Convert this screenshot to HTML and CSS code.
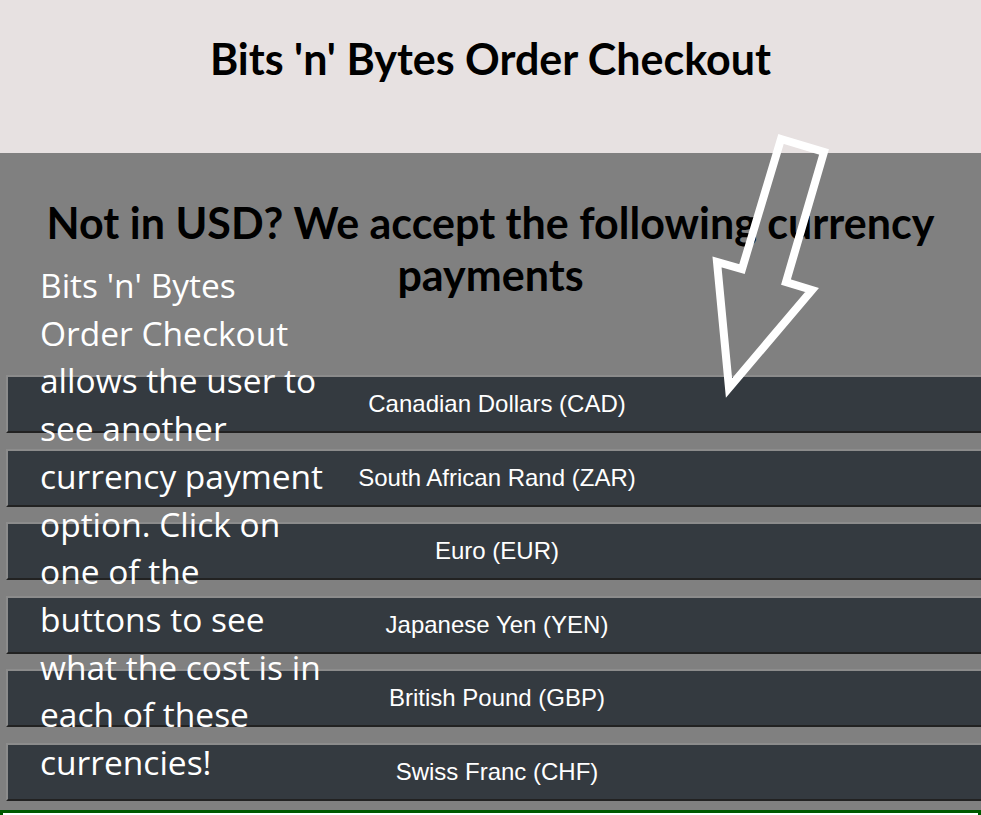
FILE: index.html
```html
<!DOCTYPE html>
<html lang="en">
<head>
<meta charset="utf-8">
<title>Bits 'n' Bytes Order Checkout</title>
<link rel="stylesheet" href="styles.css">
</head>
<body>
<header class="top">
  <h1 class="title">Bits 'n' Bytes Order Checkout</h1>
</header>
<main class="currency">
  <h2 class="currency-heading">Not in USD? We accept the following currency payments</h2>
  <p class="intro">Bits 'n' Bytes Order Checkout allows the user to see another currency payment option. Click on one of the buttons to see what the cost is in each of these currencies!</p>
  <svg class="arrow" width="150" height="290" viewBox="0 0 150 290" aria-hidden="true">
    <polygon points="81,19 124,32 86,162 112,170 29,268 17,142 42,149" fill="none" stroke="#ffffff" stroke-width="8" stroke-linejoin="miter"/>
  </svg>
  <div class="buttons">
    <button class="btn">Canadian Dollars (CAD)</button>
    <button class="btn">South African Rand (ZAR)</button>
    <button class="btn">Euro (EUR)</button>
    <button class="btn">Japanese Yen (YEN)</button>
    <button class="btn">British Pound (GBP)</button>
    <button class="btn">Swiss Franc (CHF)</button>
  </div>
  <div class="result"></div>
</main>
</body>
</html>
```
FILE: styles.css
```css
html, body {
  margin: 0;
  padding: 0;
}
body {
  overflow: hidden;
  width: 981px;
  height: 815px;
  background: #808080;
  position: relative;
}
.top {
  background: #e7e1e1;
  height: 153px;
  box-sizing: border-box;
  padding-top: 33px;
}
.title {
  margin: 0;
  font-family: Lato, "Liberation Sans", sans-serif;
  font-weight: 700;
  font-size: 43px;
  line-height: 52px;
  text-align: center;
  color: #000;
}
.currency {
  background: #808080;
  padding-top: 44px;
}
.currency-heading {
  margin: 0 0 74px 0;
  font-family: Lato, "Liberation Sans", sans-serif;
  font-weight: 700;
  font-size: 43px;
  line-height: 52px;
  text-align: center;
  color: #000;
}
.intro {
  position: absolute;
  left: 40px;
  top: 262px;
  width: 285px;
  margin: 0;
  font-family: "Open Sans", "Noto Sans", sans-serif;
  font-size: 33.5px;
  line-height: 47.7px;
  color: #ffffff;
  z-index: 2;
}
.arrow {
  position: absolute;
  left: 700px;
  top: 120px;
  z-index: 3;
}
.buttons {
  display: flex;
  flex-direction: column;
  gap: 15.6px;
  padding-left: 6px;
}
.btn {
  width: 982px;
  height: 58px;
  box-sizing: border-box;
  background: #343a40;
  border-style: solid;
  border-width: 2px;
  border-color: #8c8c8c #222222 #222222 #8c8c8c;
  color: #ffffff;
  font-family: "Liberation Sans", Arial, sans-serif;
  font-size: 24px;
  text-align: center;
  padding: 0;
  margin: 0;
}
.result {
  margin-top: 9px;
  height: 40px;
  background: #ffffff;
  border: 3px solid #005a00;
}
```
